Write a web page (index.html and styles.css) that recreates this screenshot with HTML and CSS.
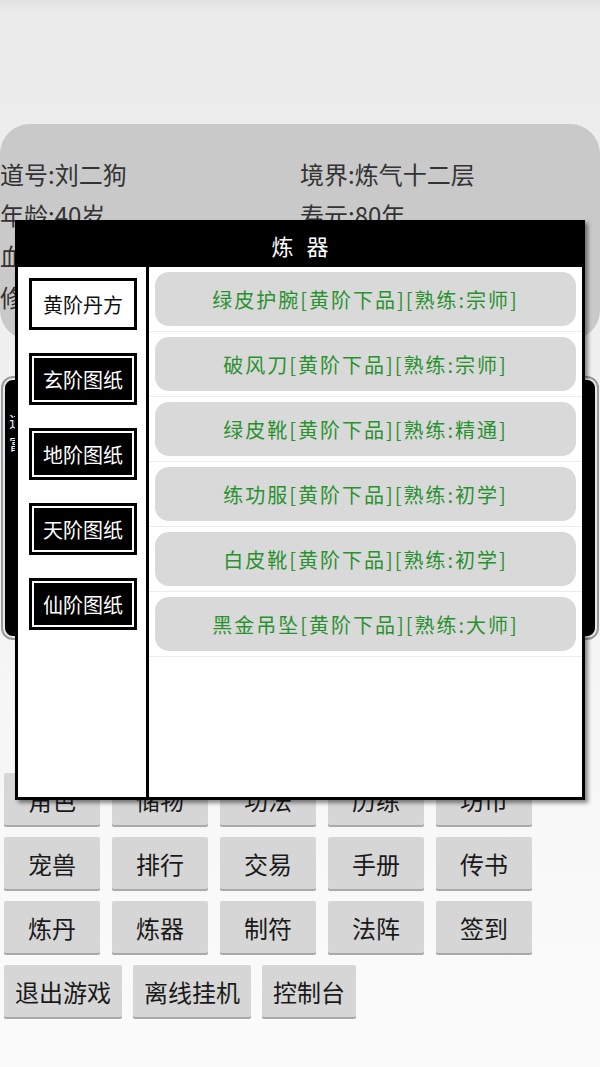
FILE: index.html
```html
<!DOCTYPE html>
<html lang="zh">
<head>
<meta charset="utf-8">
<title>炼器</title>
<link rel="stylesheet" href="styles.css">
</head>
<body>
<div class="screen">
  <div class="statusbar"></div>
  <div class="info-card">
    <div class="info-item">道号:刘二狗</div>
    <div class="info-item">境界:炼气十二层</div>
    <div class="info-item">年龄:40岁</div>
    <div class="info-item">寿元:80年</div>
    <div class="info-item">血量:1200/1200</div>
    <div class="info-item">灵力:800/800</div>
    <div class="info-item">修为:3500/12000</div>
    <div class="info-item">灵石:2680</div>
  </div>
  <div class="dark-panel">
    <div class="dark-lines">
      <div>道具背包</div>
      <div>富贵</div>
    </div>
    <div class="dark-btn"></div>
  </div>
  <div class="menu">
    <div class="menu-row">
      <div class="mbtn">角色</div><div class="mbtn">储物</div><div class="mbtn">功法</div><div class="mbtn">历练</div><div class="mbtn">坊市</div>
    </div>
    <div class="menu-row">
      <div class="mbtn">宠兽</div><div class="mbtn">排行</div><div class="mbtn">交易</div><div class="mbtn">手册</div><div class="mbtn">传书</div>
    </div>
    <div class="menu-row">
      <div class="mbtn">炼丹</div><div class="mbtn">炼器</div><div class="mbtn">制符</div><div class="mbtn">法阵</div><div class="mbtn">签到</div>
    </div>
    <div class="menu-row menu-row-wide">
      <div class="mbtn mbtn-auto">退出游戏</div><div class="mbtn mbtn-auto">离线挂机</div><div class="mbtn mbtn-auto">控制台</div>
    </div>
  </div>
</div>

<div class="modal">
  <div class="modal-head">炼&nbsp;器</div>
  <div class="modal-body">
    <div class="tabs">
      <div class="tab tab-active">黄阶丹方</div>
      <div class="tab">玄阶图纸</div>
      <div class="tab">地阶图纸</div>
      <div class="tab">天阶图纸</div>
      <div class="tab">仙阶图纸</div>
    </div>
    <div class="divider"></div>
    <div class="list">
      <div class="row"><div class="pill">绿皮护腕[黄阶下品][熟练:宗师]</div></div>
      <div class="row"><div class="pill">破风刀[黄阶下品][熟练:宗师]</div></div>
      <div class="row"><div class="pill">绿皮靴[黄阶下品][熟练:精通]</div></div>
      <div class="row"><div class="pill">练功服[黄阶下品][熟练:初学]</div></div>
      <div class="row"><div class="pill">白皮靴[黄阶下品][熟练:初学]</div></div>
      <div class="row"><div class="pill">黑金吊坠[黄阶下品][熟练:大师]</div></div>
    </div>
  </div>
</div>
</body>
</html>
```

FILE: styles.css
```css
* { box-sizing: border-box; }

html, body {
  margin: 0;
  padding: 0;
}

body {
  width: 600px;
  height: 1067px;
  overflow: hidden;
  position: relative;
  font-family: "Noto Sans CJK SC", "Noto Sans", sans-serif;
  font-weight: 400;
  background: linear-gradient(to bottom, #ebebeb 0px, #efefef 300px, #f6f6f6 700px, #fbfbfb 1067px);
}

.screen {
  display: flex;
  flex-direction: column;
}

.statusbar {
  height: 12px;
  background: linear-gradient(to bottom, #e2e2e2, #eaeaea);
}

.info-card {
  margin-top: 112px;
  height: 216px;
  background: #c9c9c9;
  border-radius: 30px;
  padding: 29px 0 0 0;
  display: grid;
  grid-template-columns: 300px 300px;
  grid-auto-rows: 41px;
  color: #333;
  font-size: 24px;
  line-height: 41px;
  overflow: hidden;
}

.info-item {
  white-space: nowrap;
}

.dark-panel {
  margin: 38px 3px 0 3px;
  height: 260px;
  background: #000;
  border: 2px solid #e8e8e8;
  border-radius: 10px;
  box-shadow: 0 0 0 2px #9a9a9a;
  padding: 30px 0 0 4px;
  display: flex;
  flex-direction: column;
  justify-content: space-between;
}

.dark-lines {
  color: #eee;
  font-size: 16px;
  line-height: 22px;
}

.dark-btn {
  margin: 0 0 8px 6px;
  width: 120px;
  height: 58px;
  border: 2px solid #ddd;
  border-radius: 10px;
}

.menu {
  margin-top: 135px;
  padding-left: 4px;
  display: flex;
  flex-direction: column;
  gap: 12px;
}

.menu-row {
  display: flex;
  gap: 12px;
}

.menu-row-wide {
  gap: 11px;
}

.mbtn {
  width: 96px;
  height: 52px;
  background: #d6d6d6;
  border-radius: 2px;
  box-shadow: 0 2px 0 #a9a9a9;
  color: #1a1a1a;
  font-size: 24px;
  display: flex;
  align-items: center;
  justify-content: center;
}

.mbtn-auto {
  width: auto;
  padding: 0 11px;
}

/* modal overlay */
.modal {
  position: absolute;
  left: 15px;
  top: 220px;
  width: 570px;
  height: 580px;
  background: #fff;
  border: 3px solid #000;
  box-shadow: 3px 3px 4px rgba(0, 0, 0, 0.45);
  display: flex;
  flex-direction: column;
}

.modal-head {
  height: 44px;
  background: #000;
  color: #fff;
  font-size: 22px;
  letter-spacing: 4px;
  padding-left: 4px;
  display: flex;
  align-items: center;
  justify-content: center;
}

.modal-body {
  flex: 1;
  display: flex;
}

.tabs {
  width: 128px;
  padding: 11px 0 0 11px;
  display: flex;
  flex-direction: column;
  gap: 23px;
}

.tab {
  width: 108px;
  height: 52px;
  background: #000;
  border: 3px solid #000;
  box-shadow: inset 0 0 0 2px #fff;
  color: #fff;
  font-size: 20px;
  display: flex;
  align-items: center;
  justify-content: center;
}

.tab-active {
  background: #fff;
  color: #111;
  box-shadow: none;
}

.divider {
  width: 3px;
  background: #000;
}

.list {
  flex: 1;
  display: flex;
  flex-direction: column;
}

.row {
  padding: 5px 6px 5px 6px;
  border-bottom: 1px solid #ececec;
}

.pill {
  height: 54px;
  background: #d9d9d9;
  border-radius: 14px;
  color: #2a9130;
  font-size: 20px;
  letter-spacing: 2px;
  display: flex;
  align-items: center;
  justify-content: center;
  white-space: nowrap;
}
```
